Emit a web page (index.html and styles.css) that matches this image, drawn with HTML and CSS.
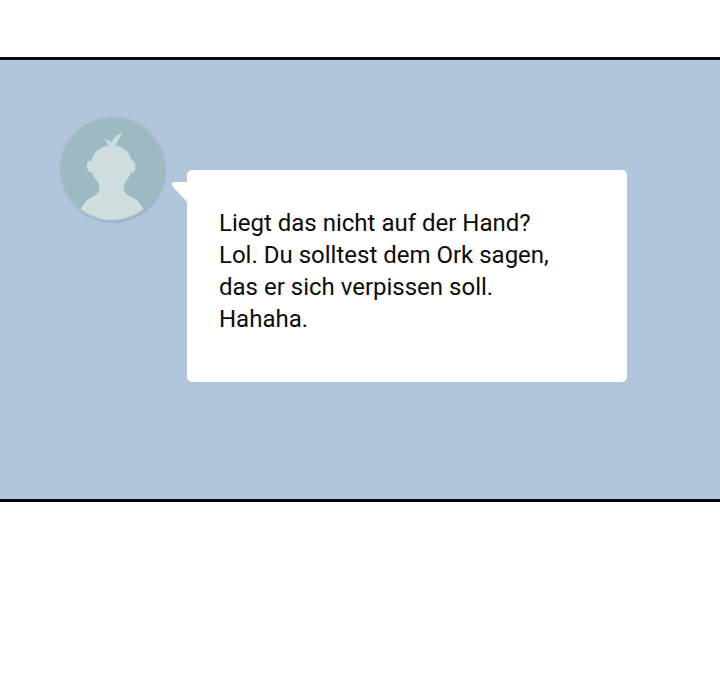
FILE: index.html
```html
<!DOCTYPE html>
<html lang="de">
	<head>
		<meta charset="UTF-8">
		<meta name="viewport" content="width=device-width, initial-scale=1.0">
		<title>Chat</title>
		<link rel="stylesheet" href="styles.css">
	</head>

	<body>
		<main class="chat">
			<div class="message">
				<svg class="avatar" viewBox="0 0 104 104" aria-hidden="true">
					<defs>
						<clipPath id="round"><circle cx="52" cy="52" r="51"/></clipPath>
					</defs>
					<circle cx="52" cy="52" r="52" fill="#9dbac3"/>
					<g fill="#cfdddf" clip-path="url(#round)">
						<!-- hair -->
						<path d="M49 30C48.500 26 46 24 44 22.500C47 22 50 23.500 51.500 26C53 21 57 17 62 16.500C60 20 57 25 55 30Z"/>
						<!-- head, ears and shoulders -->
						<path d="M52 28.500C42 28.500 33.500 34 31.500 43.500C28 43.500 26.500 46 27 50C27.500 54 29 56 32 55.500C34 62 39.500 65 39.500 70C39.500 76 36 78 32 80C26 83 22 89 18 97V106H86V97C82 89 78 83 72 80C67 78 63.500 76 63.500 70C63.500 65 69 62 71 55.500C74 56 75 54 75.500 50C75.500 46 74 43.500 71.500 43.500C70 34 62 28.500 52 28.500Z"/>
					</g>
				</svg>
				<div class="bubble">
					<svg class="tail" viewBox="0 0 16 21" aria-hidden="true">
						<path d="M16 0H2Q0 0 0 2Q0 4 2 6L16 21Z" fill="#fff"/>
					</svg>
					<p class="text">Liegt das nicht auf der Hand?<br>Lol. Du solltest dem Ork sagen,<br>das er sich verpissen soll.<br>Hahaha.</p>
				</div>
			</div>
		</main>
	</body>
</html>
```
FILE: styles.css
```css
body {
	margin: 0;
	padding-top: 57px;
	background: #fff;
	font-family: Roboto, "Liberation Sans", sans-serif;
}

.chat {
	padding: 57px 93px 117px 60px;
	border-top: 3px solid #05050d;
	border-bottom: 3px solid #05050d;
	background: #b1c6da;
}

.message {
	display: flex;
	align-items: flex-start;
	gap: 23px;
}

.avatar {
	flex: none;
	width: 104px;
	height: 104px;
	border-radius: 50%;
	box-shadow: 1px 1px 3px rgba(80, 105, 130, 0.35);
}

.bubble {
	position: relative;
	flex: 1;
	margin-top: 53px;
	padding: 37px 32px 47px;
	border-radius: 5px;
	background: #fff;
}

.tail {
	position: absolute;
	top: 12px;
	left: -15px;
	width: 16px;
	height: 21px;
}

.text {
	margin: 0;
	color: #0c0c0c;
	font-size: 24px;
	line-height: 32px;
}
```
